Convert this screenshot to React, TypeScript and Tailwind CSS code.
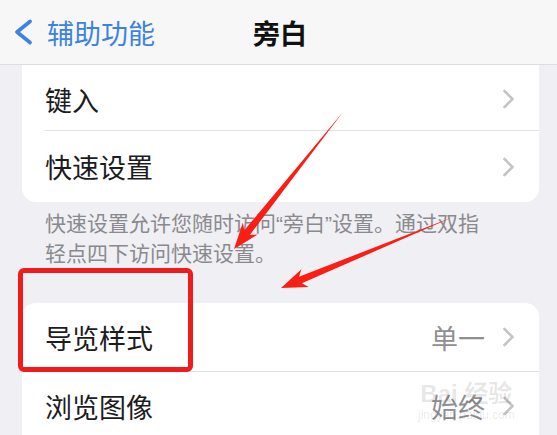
import React from "react"

type Pt = [number, number]

// tapered annotation arrow: thin at the tail, barbed head at the tip
function arrowPoints(tail: Pt, tip: Pt, headLen = 21, headW = 9.5, shaftW = 3.6) {
  const dx = tip[0] - tail[0]
  const dy = tip[1] - tail[1]
  const len = Math.hypot(dx, dy)
  const ux = dx / len
  const uy = dy / len
  const nx = -uy
  const ny = ux
  const bx = tip[0] - ux * headLen
  const by = tip[1] - uy * headLen
  const wx = tip[0] - ux * (headLen + 5)
  const wy = tip[1] - uy * (headLen + 5)
  const pts: Pt[] = [
    tail,
    [bx + nx * shaftW, by + ny * shaftW],
    [wx + nx * headW, wy + ny * headW],
    tip,
    [wx - nx * headW, wy - ny * headW],
    [bx - nx * shaftW, by - ny * shaftW],
  ]
  return pts.map((p) => p[0].toFixed(1) + "," + p[1].toFixed(1)).join(" ")
}

function Chevron() {
  return (
    <svg width="13" height="20" viewBox="0 0 13 20" className="shrink-0">
      <path d="M2.5 2 L10.5 10 L2.5 18" fill="none" stroke="#c4c4c7" strokeWidth="2.6" strokeLinecap="round" strokeLinejoin="round" />
    </svg>
  )
}

function Row({ label, value, className }: { label: string; value?: string; className: string }) {
  return (
    <div className={"flex items-center pl-[23px] pr-[24px] " + className}>
      <span className="flex-1 text-[27px] text-[#1c1c1e]">{label}</span>
      {value && <span className="mr-[17px] text-[27px] text-[#8e8e93]">{value}</span>}
      <Chevron />
    </div>
  )
}

export default function App() {
  return (
    <div className="relative w-[557px] h-[435px] overflow-hidden bg-[#efeff4] font-['Noto_Sans_CJK_SC','Noto_Sans',sans-serif] leading-none">
      <header className="h-[65px] grid grid-cols-[1fr_auto_1fr] items-center bg-[#f7f7f7] border-b border-[#dedede]">
        <div className="flex items-center pl-[13px] gap-[14px] text-[#3d82e0]">
          <svg width="20" height="26" viewBox="0 0 20 26">
            <path d="M17 2.5 L4 13 L17 23.5" fill="none" stroke="#3d82e0" strokeWidth="3.6" strokeLinecap="round" strokeLinejoin="round" />
          </svg>
          <span className="text-[27px]">辅助功能</span>
        </div>
        <h1 className="text-[27px] font-semibold text-[#111] pl-[3px]">旁白</h1>
        <div />
      </header>

      <main className="pl-[22px] pr-[18px]">
        <div className="bg-white rounded-b-[14px]">
          <Row label="键入" className="h-[65px] pt-[3px]" />
          <div className="ml-[23px] h-px bg-[#e2e2e5]" />
          <Row label="快速设置" className="h-[71px]" />
        </div>

        <p className="px-[23px] pt-[6px] text-[21px] leading-[29px] text-[#8a8a8e] whitespace-nowrap">
          快速设置允许您随时访问<span className="font-['Liberation_Sans',sans-serif]">“</span>旁白
          <span className="font-['Liberation_Sans',sans-serif]">”</span>设置。通过双指
          <br />
          轻点四下访问快速设置。
        </p>

        <div className="mt-[36px] bg-white rounded-t-[14px]">
          <Row label="导览样式" value="单一" className="h-[68px]" />
          <div className="ml-[23px] h-px bg-[#e2e2e5]" />
          <Row label="浏览图像" value="始终" className="h-[68px]" />
        </div>
      </main>

      {/* watermark */}
      <div className="absolute left-[418px] top-[382px] flex flex-col items-center text-black/10 pointer-events-none">
        <span className="text-[24px] font-bold font-['Liberation_Sans','Noto_Sans_CJK_SC',sans-serif]">Bai 经验</span>
        <span className="mt-[3px] text-[12px] font-['Liberation_Sans',sans-serif]">jingyan.baidu.com</span>
      </div>

      {/* annotations */}
      <div className="absolute left-[18px] top-[268px] w-[175px] h-[104px] border-[5px] border-[#f01c1c] rounded-[6px] pointer-events-none" />
      <svg className="absolute inset-0 pointer-events-none" width="557" height="435">
        <polygon points={arrowPoints([343, 112], [234, 249])} fill="#fa1e14" />
        <polygon points={arrowPoints([453, 217], [281, 288])} fill="#fa1e14" />
      </svg>
    </div>
  )
}
